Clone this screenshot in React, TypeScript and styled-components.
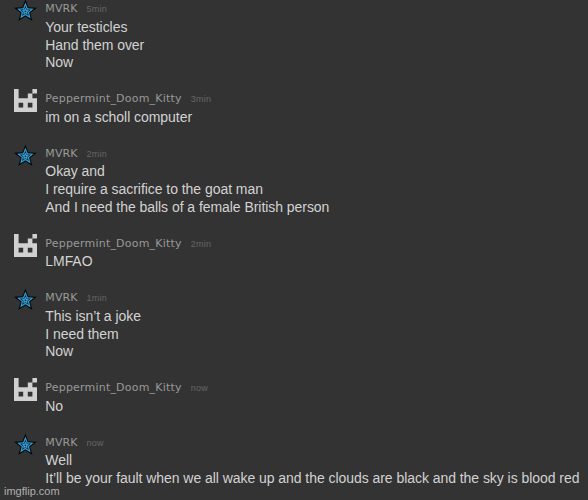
import React from "react";
import styled, { createGlobalStyle } from "styled-components";

const GlobalStyle = createGlobalStyle`
  body { margin: 0; background: #333333; overflow: hidden; }
`;

const Chat = styled.main`
  position: relative;
  box-sizing: border-box;
  width: 588px;
  height: 500px;
  overflow: hidden;
  padding-left: 14px;
  background: #333333;
`;

const Thread = styled.div`
  display: flex;
  flex-direction: column;
  gap: 17.2px;
  margin-top: -0.8px;
`;

const Message = styled.article`
  display: grid;
  grid-template-columns: 23px 1fr;
  column-gap: 8.3px;
`;

const Avatar = styled.svg`
  display: block;
  width: 23px;
  height: 23px;
`;

const Header = styled.header`
  display: flex;
  align-items: baseline;
  gap: 9px;
  height: 19.7px;
  line-height: 19.7px;
  white-space: nowrap;
`;

const Author = styled.span<{ $long: boolean }>`
  font: 11px/19.7px "DejaVu Sans", sans-serif;
  letter-spacing: ${(p) => (p.$long ? "0.2px" : "0.1px")};
  color: #999999;
`;

const Time = styled.time`
  font: 9px/19.7px "Liberation Sans", sans-serif;
  letter-spacing: 0.25px;
  color: #666666;
`;

const Line = styled.p`
  margin: 0;
  height: 17.7px;
  font: 14px/17.7px "Liberation Sans", sans-serif;
  letter-spacing: -0.05px;
  color: #d2d2d2;
  white-space: nowrap;
`;

const Watermark = styled.span`
  position: absolute;
  left: 4px;
  bottom: 2px;
  font: 11px/13px "Liberation Sans", sans-serif;
  color: #b0b0b0;
`;

const star = (r: number, inner = 0.42) =>
  Array.from({ length: 10 }, (_, i) => {
    const a = (i * Math.PI) / 5 - Math.PI / 2;
    const d = i % 2 ? r * inner : r;
    return `${11.4 + d * Math.cos(a)},${12.4 + d * Math.sin(a)}`;
  }).join(" ");

const StarAvatar = () => (
  <Avatar viewBox="0 0 23 23">
    <polygon points={star(12)} fill="#030608" />
    <polygon points={star(8.8, 0.44)} fill="#359fd6" />
    <polygon points={star(5.8, 0.42)} fill="#0a1c28" />
    <polygon points={star(3.8, 0.5)} fill="#359fd6" />
    <circle cx="11.4" cy="12.4" r="0.8" fill="#10222e" />
  </Avatar>
);

const CatAvatar = () => (
  <Avatar viewBox="0 0 5 5">
    <path
      fill="#d0d0d0"
      fillRule="evenodd"
      d="M0 0H1V2H3V1H4V0H5V1H4V2H5V5H0ZM1 3V4H2V3ZM3 3V4H4V3Z"
    />
  </Avatar>
);

const MVRK = "MVRK";
const KITTY = "Peppermint_Doom_Kitty";

const messages = [
  { author: MVRK, time: "5min", lines: ["Your testicles", "Hand them over", "Now"] },
  { author: KITTY, time: "3min", lines: ["im on a scholl computer"] },
  {
    author: MVRK,
    time: "2min",
    lines: ["Okay and", "I require a sacrifice to the goat man", "And I need the balls of a female British person"],
  },
  { author: KITTY, time: "2min", lines: ["LMFAO"] },
  { author: MVRK, time: "1min", lines: ["This isn’t a joke", "I need them", "Now"] },
  { author: KITTY, time: "now", lines: ["No"] },
  {
    author: MVRK,
    time: "now",
    lines: ["Well", "It’ll be your fault when we all wake up and the clouds are black and the sky is blood red"],
  },
];

export default function App() {
  return (
    <Chat>
      <GlobalStyle />
      <Thread>
        {messages.map((m, i) => (
          <Message key={i}>
            {m.author === MVRK ? <StarAvatar /> : <CatAvatar />}
            <div>
              <Header>
                <Author $long={m.author === KITTY}>{m.author}</Author>
                <Time>{m.time}</Time>
              </Header>
              {m.lines.map((line) => (
                <Line key={line}>{line}</Line>
              ))}
            </div>
          </Message>
        ))}
      </Thread>
      <Watermark>imgflip.com</Watermark>
    </Chat>
  );
}
